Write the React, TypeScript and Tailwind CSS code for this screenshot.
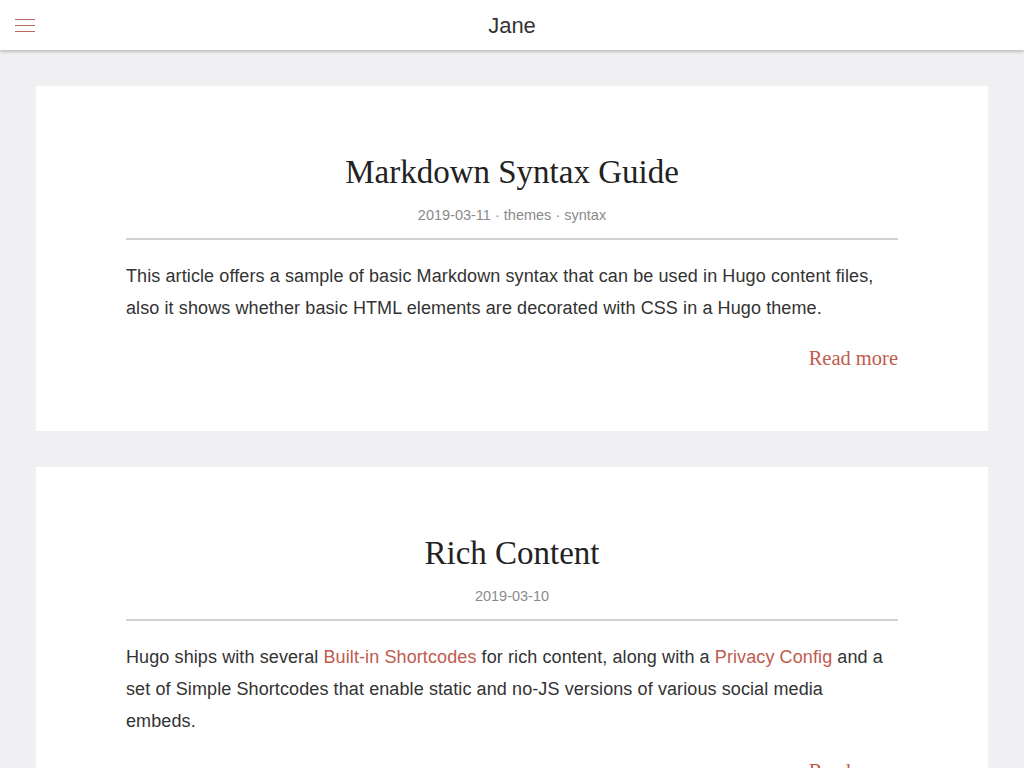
import React from 'react';

const serif = "font-['Liberation_Serif','Times_New_Roman',serif]";

const posts = [
  {
    title: 'Markdown Syntax Guide',
    meta: '2019-03-11 · themes · syntax',
    body: (
      <>
        This article offers a sample of basic Markdown syntax that can be used in Hugo content files,
        also it shows whether basic HTML elements are decorated with CSS in a Hugo theme.
      </>
    ),
  },
  {
    title: 'Rich Content',
    meta: '2019-03-10',
    body: (
      <>
        Hugo ships with several <a className="text-[#c05b4d]">Built-in Shortcodes</a> for rich content,
        along with a <a className="text-[#c05b4d]">Privacy Config</a> and a set of Simple Shortcodes
        that enable static and no-JS versions of various social media embeds.
      </>
    ),
  },
];

const PostCard = ({ post }: { post: (typeof posts)[number] }) => {
  return (
    <article className="bg-white px-[90px] pt-[64px] pb-[59px]">
      <h1 className={`${serif} text-center text-[33px] leading-[44px] text-[#222]`}>{post.title}</h1>
      <div className="mt-[11px] text-center text-[14.5px] leading-[20px] text-[#8a8a8a]">{post.meta}</div>
      <div className="mt-[13px] h-[2px] bg-[#d2d2d2]" />
      <p className="mt-[20px] pr-[6px] text-[18px] leading-[32px] tracking-[0.1px] text-[#333]">{post.body}</p>
      <div className="mt-[20px] flex justify-end">
        <a className={`${serif} text-[20.5px] leading-[28px] text-[#c05b4d]`}>Read more</a>
      </div>
    </article>
  );
};

export default function App() {
  return (
    <div className="min-h-screen bg-[#f0f0f2] font-['Liberation_Sans',Arial,sans-serif]">
      <header className="relative flex h-[50px] items-center justify-center bg-white shadow-[0_2px_3px_rgba(0,0,0,0.2)]">
        <button className="absolute left-[15px] top-[19px] flex w-[20px] flex-col gap-[5px]">
          <span className="block h-px w-full bg-[#b86a60]" />
          <span className="block h-px w-full bg-[#b86a60]" />
          <span className="block h-px w-full bg-[#b86a60]" />
        </button>
        <span className="text-[22px] text-[#333]">Jane</span>
      </header>
      <main className="flex flex-col gap-[36px] px-[36px] pt-[36px]">
        {posts.map((p) => (
          <PostCard key={p.title} post={p} />
        ))}
      </main>
    </div>
  );
}
